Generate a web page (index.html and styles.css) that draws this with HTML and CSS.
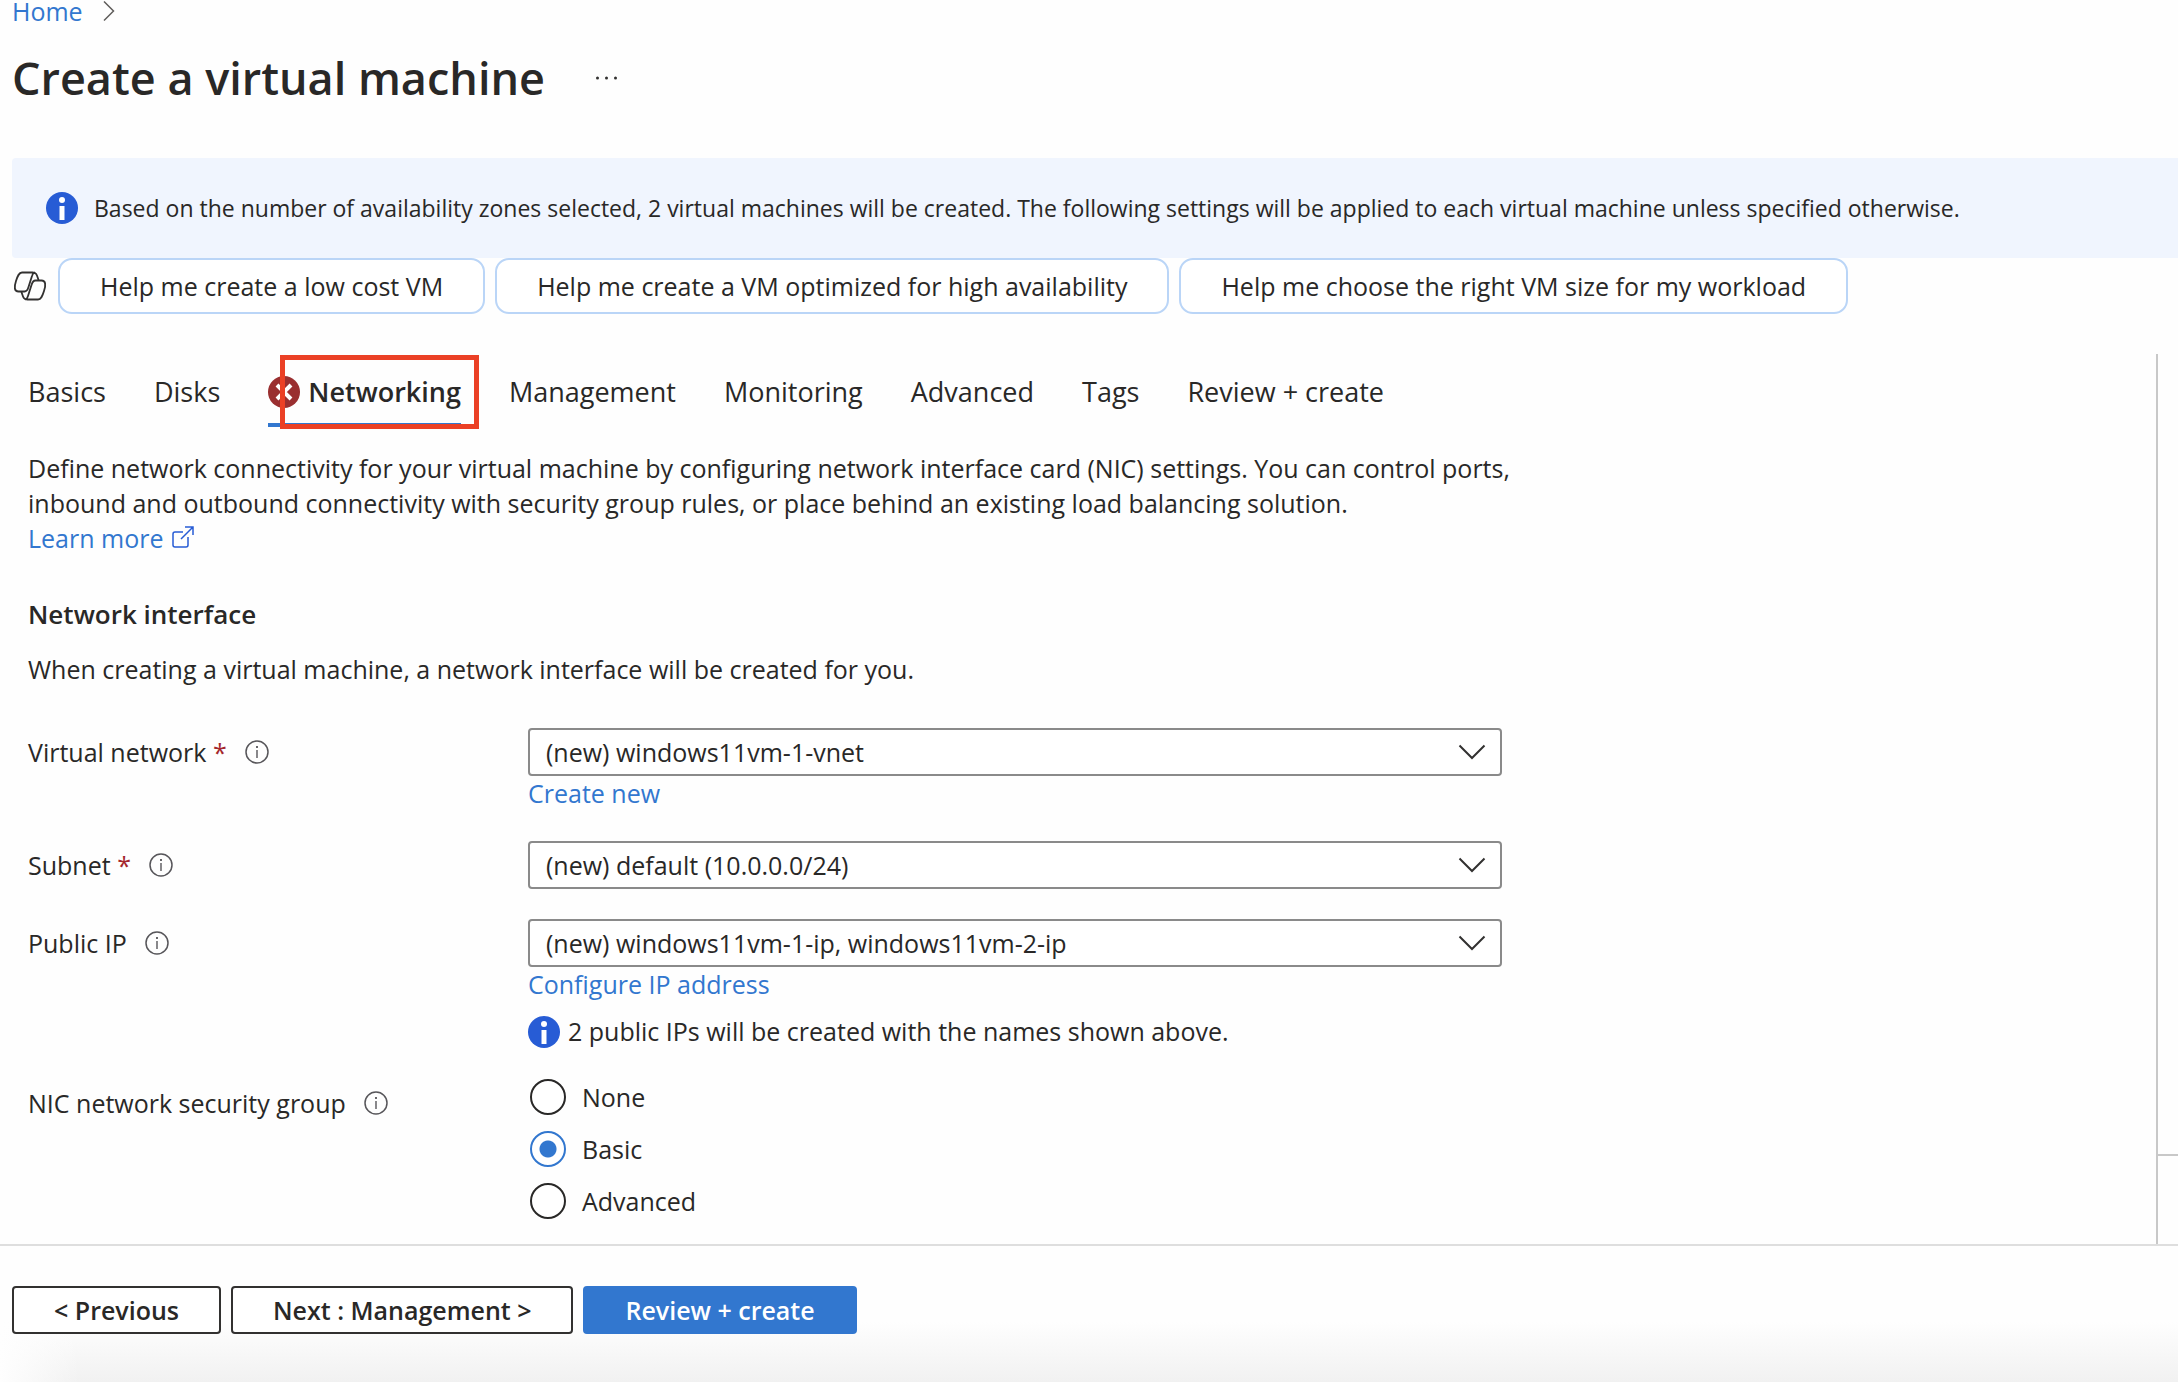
FILE: index.html
```html
<!DOCTYPE html>
<html lang="en">
<head>
<meta charset="utf-8">
<meta name="viewport" content="width=device-width, initial-scale=1">
<title>Create a virtual machine</title>
<link rel="stylesheet" href="styles.css">
</head>
<body>
<svg class="defs" aria-hidden="true">
  <symbol id="info-solid" viewBox="0 0 32 32">
    <circle cx="16" cy="16" r="16" fill="#275cd5"/>
    <circle cx="16" cy="8" r="3" fill="#fff"/>
    <path d="M13.5 14h5v14h-5z" fill="#fff"/>
  </symbol>
  <symbol id="info-outline" viewBox="0 0 24 24">
    <circle cx="12" cy="12" r="11" fill="none" stroke="#57565a" stroke-width="1.5"/>
    <path d="M11.3 10h1.4v8h-1.4zM11.1 6h1.8v2h-1.8z" fill="#57565a"/>
  </symbol>
  <symbol id="chevron" viewBox="0 0 28 16">
    <path d="M1.5 1.5l12.5 12.5 12.5-12.5" fill="none" stroke="#323130" stroke-width="2"/>
  </symbol>
</svg>
<header class="top">
  <nav class="crumbs" aria-label="Breadcrumb">
    <a href="#">Home</a>
    <svg class="crumb-sep" viewBox="0 0 12 20"><path d="M1 0.5l9.5 9.5-9.5 9.5" fill="none" stroke="#605e5c" stroke-width="1.5"/></svg>
  </nav>
  <div class="title-row">
    <h1>Create a virtual machine</h1>
    <button class="more" type="button" aria-label="More actions"><svg viewBox="0 0 24 6"><circle cx="2.5" cy="3" r="1.5"/><circle cx="11.5" cy="3" r="1.5"/><circle cx="20.5" cy="3" r="1.5"/></svg></button>
  </div>
</header>
<div class="notice" role="status">
  <svg class="info-solid"><use href="#info-solid"/></svg>
  <p>Based on the number of availability zones selected, 2 virtual machines will be created. The following settings will be applied to each virtual machine unless specified otherwise.</p>
</div>
<div class="suggestions">
  <svg class="copilot" viewBox="12 10 36 32" fill="none" stroke="#323130" stroke-width="1.8" stroke-linejoin="round" stroke-linecap="round">
    <path id="half" d="M38.5 20c-1.5-4.5-1.8-7.500-6-7.500H22c-3 0-4.300 3-6 8.500-2 6-1.800 10.500 2.500 10.500h6c2.500 0 3.300-2 4-4.500l3.500-11c.5-1.800 1-3 2.500-3.300"/>
    <use href="#half" transform="rotate(180 30 26)"/>
  </svg>
  <button class="pill" type="button">Help me create a low cost VM</button>
  <button class="pill" type="button">Help me create a VM optimized for high availability</button>
  <button class="pill" type="button">Help me choose the right VM size for my workload</button>
</div>
<div class="body">
  <main class="content">
    <nav class="tabs" aria-label="Steps">
      <a href="#">Basics</a>
      <a href="#">Disks</a>
      <a href="#" class="active" aria-current="step"><svg class="error" viewBox="0 0 32 32"><circle cx="16" cy="16" r="16" fill="#9a2f30"/><path d="M9 9l14 14M23 9L9 23" stroke="#fff" stroke-width="4"/></svg>Networking</a>
      <a href="#">Management</a>
      <a href="#">Monitoring</a>
      <a href="#">Advanced</a>
      <a href="#">Tags</a>
      <a href="#">Review + create</a>
    </nav>
    <p class="intro">Define network connectivity for your virtual machine by configuring network interface card (NIC) settings. You can control ports, inbound and outbound connectivity with security group rules, or place behind an existing load balancing solution.<br><a href="#">Learn more <svg class="external" viewBox="0 0 22 22"><path d="M11 6H3a2 2 0 0 0-2 2v11a2 2 0 0 0 2 2h11a2 2 0 0 0 2-2v-8M9 13L21 1M13 1h8v8" fill="none" stroke="#275cd5" stroke-width="1.5"/></svg></a></p>
    <h2>Network interface</h2>
    <p class="lead">When creating a virtual machine, a network interface will be created for you.</p>
    <form class="fields" id="vm">
      <div class="field">
        <div class="label"><label for="vnet">Virtual network <span class="req">*</span></label><svg class="info"><use href="#info-outline"/></svg></div>
        <div class="control">
          <div class="select"><select id="vnet"><option>(new) windows11vm-1-vnet</option></select><svg class="chevron"><use href="#chevron"/></svg></div>
          <a href="#">Create new</a>
        </div>
      </div>
      <div class="field">
        <div class="label"><label for="subnet">Subnet <span class="req">*</span></label><svg class="info"><use href="#info-outline"/></svg></div>
        <div class="control">
          <div class="select"><select id="subnet"><option>(new) default (10.0.0.0/24)</option></select><svg class="chevron"><use href="#chevron"/></svg></div>
        </div>
      </div>
      <div class="field">
        <div class="label"><label for="ip">Public IP</label><svg class="info"><use href="#info-outline"/></svg></div>
        <div class="control">
          <div class="select"><select id="ip"><option>(new) windows11vm-1-ip, windows11vm-2-ip</option></select><svg class="chevron"><use href="#chevron"/></svg></div>
          <a href="#">Configure IP address</a>
          <p class="hint"><svg class="info-solid"><use href="#info-solid"/></svg>2 public IPs will be created with the names shown above.</p>
        </div>
      </div>
      <div class="field">
        <div class="label"><span id="nsg">NIC network security group</span><svg class="info"><use href="#info-outline"/></svg></div>
        <div class="radios" role="radiogroup" aria-labelledby="nsg">
          <label><input type="radio" name="nsg" value="none">None</label>
          <label><input type="radio" name="nsg" value="basic" checked>Basic</label>
          <label><input type="radio" name="nsg" value="advanced">Advanced</label>
        </div>
      </div>
    </form>
  </main>
  <aside class="side"><div class="side-foot"></div></aside>
</div>
<footer class="actions">
  <button class="btn" type="button">&lt; Previous</button>
  <button class="btn" type="button">Next : Management &gt;</button>
  <button class="btn primary" type="submit" form="vm">Review + create</button>
</footer>
</body>
</html>
```
FILE: styles.css
```css
* { box-sizing: border-box; }

body {
  margin: 0;
  min-height: 100vh;
  display: flex;
  flex-direction: column;
  background: #fefefe;
  color: #292827;
  font: 25px/35px "Open Sans", "Noto Sans", sans-serif;
}

h1, h2, p { margin: 0; }
a { color: #3277cf; text-decoration: none; }
button, select { font: inherit; color: inherit; }
svg { flex: none; }

.defs { display: none; }
.info-solid, .error { width: 32px; height: 32px; }
.info { width: 24px; height: 24px; }

/* Header */
.top { padding: 0 12px; }
.crumbs { display: flex; align-items: center; gap: 20px; line-height: 22px; }
.crumb-sep { width: 12px; height: 20px; }
.title-row { display: flex; align-items: center; gap: 50px; margin-top: 26px; }
h1 { font-size: 45px; line-height: 60px; font-weight: 600; }
.more { display: flex; padding: 0; border: 0; background: none; }
.more svg { width: 24px; height: 6px; fill: #323130; }

.notice {
  display: flex;
  align-items: center;
  gap: 16px;
  margin: 50px 0 0 12px;
  padding: 32px 34px;
  border-radius: 4px 0 0 4px;
  background: #f0f5fe;
  font-size: 23px;
  line-height: 36px;
}

.suggestions { display: flex; flex-wrap: wrap; align-items: center; gap: 10px; padding: 0 12px; }
.copilot { width: 36px; height: 32px; }
.pill {
  height: 56px;
  padding: 0 40px;
  border: 2px solid #bad5f7;
  border-radius: 14px;
  background: #fff;
}

/* Wizard body */
.body { display: flex; margin-top: 40px; }
.content { flex: 1; min-width: 0; padding: 19px 28px 25px; }
.side {
  width: 22px;
  display: flex;
  flex-direction: column;
  justify-content: flex-end;
  border-left: 2px solid #c8c8c8;
}
.side-foot { height: 90px; border-top: 2px solid #c8c8c8; }

.tabs { display: flex; gap: 48px; font-size: 27px; line-height: 38px; }
.tabs a { padding-bottom: 12px; border-bottom: 4px solid transparent; color: inherit; white-space: nowrap; }
.tabs .active {
  position: relative;
  display: flex;
  align-items: center;
  gap: 8px;
  border-color: #3277cf;
  font-weight: 600;
}
.tabs .active::after {
  content: "";
  position: absolute;
  inset: -18px -18px -6px 12px;
  border: 5px solid #eb4025;
}

.intro { max-width: 1500px; margin-top: 24px; }
.external { width: 22px; height: 22px; margin-left: 2px; }
h2 { margin-top: 40px; font-size: 26px; line-height: 36px; font-weight: 600; }
.lead { margin-top: 20px; }

/* Fields */
.fields { display: grid; gap: 30px; margin-top: 41px; }
.field { display: grid; grid-template-columns: 500px minmax(0, 974px); align-items: start; }
.label { display: flex; align-items: center; gap: 18px; height: 48px; }
.req { color: #a4262c; }
.control a { display: block; width: fit-content; }
.select { position: relative; }
.select select {
  display: block;
  width: 100%;
  height: 48px;
  padding: 0 60px 0 16px;
  border: 2px solid #8a8a8a;
  border-radius: 4px;
  background: #fff;
  appearance: none;
}
.chevron {
  position: absolute;
  top: 16px;
  right: 16px;
  width: 28px;
  height: 16px;
  pointer-events: none;
}
.hint { display: flex; align-items: center; gap: 8px; margin-top: 12px; }

.radios { display: grid; gap: 16px; padding-left: 2px; }
.radios label { display: flex; align-items: center; gap: 16px; width: fit-content; height: 36px; }
.radios input {
  width: 36px;
  height: 36px;
  margin: 0;
  border: 2px solid #292827;
  border-radius: 50%;
  background: #fff;
  appearance: none;
}
.radios input:checked {
  border-color: #3277cf;
  background: radial-gradient(circle, #3277cf 8px, #fff 9px);
}

/* Footer */
.actions {
  flex: 1;
  display: flex;
  align-items: flex-start;
  gap: 10px;
  padding: 40px 12px 46px;
  border-top: 2px solid #dedede;
  background:
    linear-gradient(to right, #fefefe, rgba(254, 254, 254, 0) 80px),
    linear-gradient(to top, #f1f1f1, #fefefe 60px);
}
.btn {
  height: 48px;
  padding: 0 40px;
  border: 2px solid #323130;
  border-radius: 4px;
  background: #fff;
  font-weight: 600;
}
.btn.primary { border-color: #3277cf; background: #3277cf; color: #fff; }
```
